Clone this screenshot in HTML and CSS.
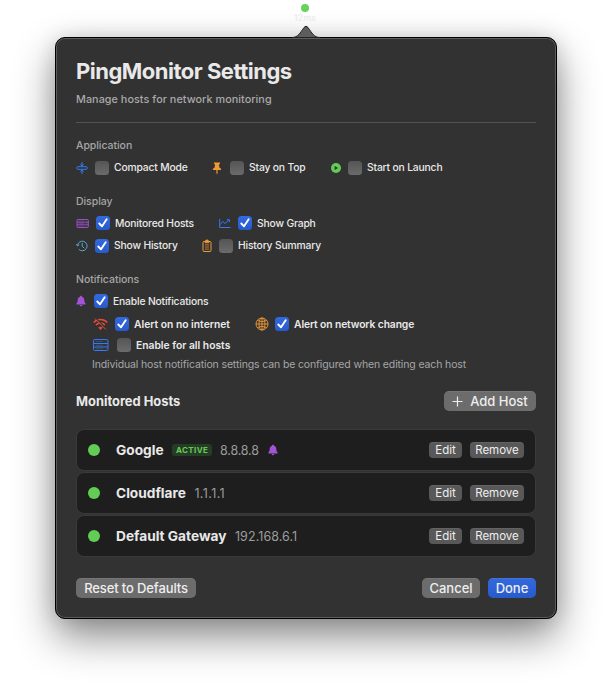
FILE: index.html
```html
<!DOCTYPE html>
<html lang="en">
<head>
<meta charset="utf-8">
<title>PingMonitor Settings</title>
<link rel="stylesheet" href="styles.css">
</head>
<body>
<svg class="defs" width="0" height="0" aria-hidden="true">
  <symbol id="bell" viewBox="0 0 10 12"><path d="M5 .8c.6 0 1 .4 1 1 1.500.4 2.200 1.600 2.300 3.200.1 2.100.6 2.800 1.300 3.600.3.500.1.900-.4.900H.8c-.5 0-.7-.4-.4-.9.700-.8 1.200-1.500 1.300-3.600.1-1.600.8-2.800 2.300-3.200 0-.6.400-1 1-1zM3.600 10h2.800c-.2.800-.7 1.200-1.400 1.200S3.800 10.800 3.600 10z" fill="currentColor"/></symbol>
</svg>
<div class="status"><span class="status-dot"></span><span class="status-text">12ms</span></div>
<main class="panel">
  <svg class="arrow" width="30" height="14" viewBox="0 0 30 14"><path d="M1 13.500C7 13.500 9 9 13 3.500Q15 .8 17 3.500C21 9 23 13.500 29 13.500z" fill="#5d5d5d" stroke="#222" stroke-width="1"/></svg>
  <h1>PingMonitor Settings</h1>
  <p class="subtitle">Manage hosts for network monitoring</p>
  <hr>
  <section class="app">
    <h2>Application</h2>
    <div class="row row-app">
      <svg class="blue" width="12" height="14" viewBox="0 0 12 14"><g fill="none" stroke="currentColor"><rect x=".7" y="5.700" width="10.600" height="2.600" rx="1"/><path d="M6 1v4M4.300 3.400 6 5l1.700-1.600M6 13V9M4.300 10.600 6 9l1.700 1.600"/></g></svg>
      <i class="check"></i><span>Compact Mode</span>
      <svg class="orange" width="10" height="14" viewBox="0 0 10 14"><path d="M2 1.400h6v1.400l-1 .8.300 2.800C8.600 7 9.200 7.900 9.200 9H5.600v3L5 13.600 4.400 12V9H.8c0-1.100.6-2 1.900-2.600L3 3.600l-1-.8z" fill="currentColor"/></svg>
      <i class="check"></i><span>Stay on Top</span>
      <svg class="green" width="10" height="14" viewBox="0 0 10 14"><circle cx="5" cy="7" r="5" fill="currentColor"/><path d="M3.600 4.900v4.200L7.200 7z" fill="#303030"/></svg>
      <i class="check"></i><span>Start on Launch</span>
    </div>
  </section>
  <section class="display">
    <h2>Display</h2>
    <div class="row row-hosts low">
      <svg class="purple" width="13" height="14" viewBox="0 0 13 14"><g fill="none" stroke="currentColor" stroke-width=".9"><rect x="1" y="3.500" width="11.300" height="8" rx=".8"/><path d="M1 6.200h11.300M1 8.800h11.300"/><path d="M2.500 4.900h5.500M2.500 7.500h5.500M2.500 10.200h5.500M10 4.900h1M10 7.500h1M10 10.200h1" stroke-width=".4"/></g></svg>
      <i class="check on"><svg viewBox="0 0 14 14"><path d="M3.300 7.500 6 10.300l4.700-7"/></svg></i><span>Monitored Hosts</span>
      <svg class="blue" width="12" height="14" viewBox="0 0 12 14"><path d="M.7 3v8.500h10.800M1 8.700 3.800 5.500l2.200 2 4-3.600M7.800 3.700h2.600v2.500" fill="none" stroke="currentColor"/></svg>
      <i class="check on"><svg viewBox="0 0 14 14"><path d="M3.300 7.500 6 10.300l4.700-7"/></svg></i><span>Show Graph</span>
    </div>
    <div class="row row-history">
      <svg class="cyan" width="12" height="14" viewBox="0 0 12 14"><path d="M1.500 6.500A4.800 4.800 0 1 1 2.800 10.300M.2 5.200l1.400 1.700 1.700-1.400M6.200 4v3.200l2 2" fill="none" stroke="currentColor"/></svg>
      <i class="check on"><svg viewBox="0 0 14 14"><path d="M3.300 7.500 6 10.300l4.700-7"/></svg></i><span>Show History</span>
      <svg class="orange" width="10" height="14" viewBox="0 0 10 14"><rect x="1" y="2.500" width="8" height="10" rx="1" fill="none" stroke="currentColor"/><path d="M3.200 1.800h.8a1 1 0 0 1 2 0h.8v2H3.200zM3 5.900h4M3 8h4M3 10.100h4" fill="currentColor" stroke="currentColor" stroke-width=".7"/></svg>
      <i class="check"></i><span>History Summary</span>
    </div>
  </section>
  <section class="notify">
    <h2>Notifications</h2>
    <div class="row row-enable low">
      <svg class="purple" width="10" height="12"><use href="#bell"/></svg>
      <i class="check on"><svg viewBox="0 0 14 14"><path d="M3.300 7.500 6 10.300l4.700-7"/></svg></i><span>Enable Notifications</span>
    </div>
    <div class="row row-alert strong low">
      <svg class="red" width="15" height="14" viewBox="0 0 15 14"><g fill="none" stroke="currentColor" stroke-width="1.500"><path d="M.7 5.500C4.500 1.600 10.500 1.600 14.300 5.500M3 8c2.500-2.600 6.500-2.600 9 0"/></g><path d="m5.200 10.600 2.300 2.300 2.300-2.300q-2.300-1.800-4.600 0" fill="currentColor"/><path d="m3 1.600 10.800 10.800" stroke="#323232" stroke-width="1.400"/><path d="m2 1.600 11 11" stroke="currentColor"/></svg>
      <i class="check on"><svg viewBox="0 0 14 14"><path d="M3.300 7.500 6 10.300l4.700-7"/></svg></i><span class="wide">Alert on no internet</span>
      <svg class="orange" width="14" height="14" viewBox="0 0 14 14"><g fill="none" stroke="currentColor" stroke-width=".9"><circle cx="7" cy="7" r="6"/><ellipse cx="7" cy="7" rx="3" ry="6"/><path d="M7 1v12M1 7h12M2.400 3.500Q7 6 11.600 3.500M2.400 10.500Q7 8 11.600 10.500"/></g></svg>
      <i class="check on"><svg viewBox="0 0 14 14"><path d="M3.300 7.500 6 10.300l4.700-7"/></svg></i><span>Alert on network change</span>
    </div>
    <div class="row row-all strong low">
      <svg class="blue" width="16" height="14" viewBox="0 0 16 14"><g fill="none" stroke="currentColor"><rect x=".5" y="1.500" width="14.500" height="11" rx="1.200"/><path d="M.5 5.500h14.500M.5 9h14.500"/><path d="M2.600 3.500h7.400M2.600 7.300h7.400M2.600 10.800h7.400M12.500 3.500h1M12.500 7.300h1M12.500 10.800h1" stroke-width=".4"/></g></svg>
      <i class="check"></i><span class="wide">Enable for all hosts</span>
    </div>
    <p class="hint">Individual host notification settings can be configured when editing each host</p>
  </section>
  <div class="hosts-head">
    <h3>Monitored Hosts</h3>
    <button class="btn add"><svg width="11" height="11" viewBox="0 0 11 11"><path d="M5.500.5v10M.5 5.500h10" stroke="#eee" stroke-width="1.200"/></svg>Add Host</button>
  </div>
  <div class="hosts">
    <div class="host"><i class="dot"></i><b>Google</b><em>ACTIVE</em><span class="ip eights">8.8.8.8</span><svg class="purple" width="10" height="12"><use href="#bell"/></svg><button class="btn small edit">Edit</button><button class="btn small remove">Remove</button></div>
    <div class="host"><i class="dot"></i><b>Cloudflare</b><span class="ip ones">1.1.1.1</span><button class="btn small edit">Edit</button><button class="btn small remove">Remove</button></div>
    <div class="host"><i class="dot"></i><b>Default Gateway</b><span class="ip">192.168.6.1</span><button class="btn small edit">Edit</button><button class="btn small remove">Remove</button></div>
  </div>
  <footer>
    <button class="btn reset">Reset to Defaults</button>
    <button class="btn cancel">Cancel</button>
    <button class="btn done">Done</button>
  </footer>
</main>
</body>
</html>
```
FILE: styles.css
```css
* { box-sizing: border-box; margin: 0; padding: 0; }
body {
  width: 612px; height: 692px; overflow: hidden; background: #fff;
  font-family: Inter, "Liberation Sans", sans-serif; font-size: 10.5px; color: #e9e9e9;
}
svg { display: block; overflow: visible; }
.defs { position: absolute; }
.status { width: 610px; height: 37px; padding-top: 4px; display: flex; flex-direction: column; align-items: center; position: relative; z-index: 1; }
.status-dot { width: 8px; height: 8px; border-radius: 50%; background: #65d45b; }
.status-text { font-size: 9px; line-height: 12px; font-weight: 600; color: #ececec; }
.panel {
  position: relative; width: 502px; height: 582px; margin-left: 55px; padding: 19px 20px 0;
  border: 1px solid #000; border-radius: 10px; background: #323232;
  box-shadow: inset 0 0 0 1px #5c5c5c, 0 18px 40px rgba(0,0,0,.46), 0 0 20px rgba(0,0,0,.12);
}
.arrow { position: absolute; top: -14px; left: 235px; }
h1 { font-size: 22px; line-height: 28px; font-weight: 700; letter-spacing: -.5px; white-space: nowrap; }
.subtitle { margin-top: 6px; height: 16px; line-height: 18px; color: #a9a9a9; font-size: 10.800px; font-weight: 500; letter-spacing: .05px; }
hr { border: 0; height: 1px; background: #535353; margin-top: 15px; }
section h2 { font-size: 10.500px; height: 16px; line-height: 18px; font-weight: 550; color: #a6a6a6; letter-spacing: -.05px; }
.app { margin-top: 14px; }
.display, .notify { margin-top: 18px; }
.row { display: grid; align-items: center; height: 14px; white-space: nowrap; }
.row span { font-size: 10.300px; font-weight: 500; height: 14px; line-height: 13px; letter-spacing: -.16px; }
.row.low span { line-height: 15px; }
.row.strong span { font-weight: 600; letter-spacing: -.11px; }
.row.strong .wide { letter-spacing: 0; }
.row-app { margin-top: 8px; grid-template-columns: 19px 19px 98px 18px 19px 82px 17px 19px 1fr; }
.row-hosts { margin-top: 7px; grid-template-columns: 20px 19px 104px 19px 19px 1fr; }
.row-history { margin-top: 9px; grid-template-columns: 19px 19px 88px 17px 19px 1fr; }
.row-enable { margin-top: 7px; grid-template-columns: 18px 19px 1fr; }
.row-alert { margin-top: 9px; padding-left: 17px; grid-template-columns: 22px 19px 121px 20px 19px 1fr; }
.row-all { margin-top: 7px; padding-left: 17px; grid-template-columns: 24px 19px 1fr; }
.check { display: block; width: 14px; height: 14px; border-radius: 3.500px; background: linear-gradient(#555, #6b6b6b); }
.check.on { background: linear-gradient(#3469df, #275bcc); }
.check path { fill: none; stroke: #fff; stroke-width: 1.900; stroke-linecap: round; stroke-linejoin: round; }
.blue { color: #347af0; } .orange { color: #f09a37; } .green { color: #63cc55; }
.purple { color: #a353d5; } .cyan { color: #5aa9d0; } .red { color: #e64b3c; }
.hint { margin-top: 5px; padding-left: 16px; line-height: 16px; color: #a6a6a6; white-space: nowrap; letter-spacing: -.13px; }
.hosts-head { margin-top: 18px; height: 20px; display: flex; justify-content: space-between; align-items: center; }
h3 { font-size: 12.900px; font-weight: 650; }
.btn {
  border: 0; border-radius: 5px; height: 20px; background: #6c6c6c; color: #eee; font: 500 13px/20px Inter, "Liberation Sans", sans-serif;
  white-space: nowrap; display: flex; align-items: center; justify-content: center; box-shadow: inset 0 1px rgba(255,255,255,.07);
}
.add { width: 92px; gap: 7px; }
.hosts { margin-top: 18px; display: grid; gap: 1px; }
.host { height: 42px; display: flex; align-items: center; padding: 0 11px; border: 1px solid #3a3a3a; border-radius: 8px; background: #1e1e1e; }
.dot { width: 12px; height: 12px; border-radius: 50%; background: #63cc55; margin-right: 16px; }
.host b { font-size: 13.700px; font-weight: 650; letter-spacing: 0; margin-right: 8.500px; }
.host em { width: 40px; height: 12px; border-radius: 3px; background: #273c26; color: #63cc55; font-size: 8px; line-height: 12px; font-weight: 700; font-style: normal; text-align: center; letter-spacing: .4px; margin-right: 8px; }
.ip { font-size: 12.500px; color: #9c9c9c; margin-right: 9px; letter-spacing: .07px; }
.eights { letter-spacing: -.2px; }
.ones { letter-spacing: .4px; }
.small { height: 16px; font-size: 11.500px; font-weight: 400; border-radius: 4px; background: #585858; }
.edit { width: 33px; margin-left: auto; margin-right: 8px; }
.remove { width: 54px; }
footer { margin-top: 21px; display: flex; gap: 8px; }
.reset { width: 120px; margin-right: auto; letter-spacing: -.12px; }
.cancel { width: 58px; }
.done { width: 48px; background: linear-gradient(#3469df, #275bcc); }
```
